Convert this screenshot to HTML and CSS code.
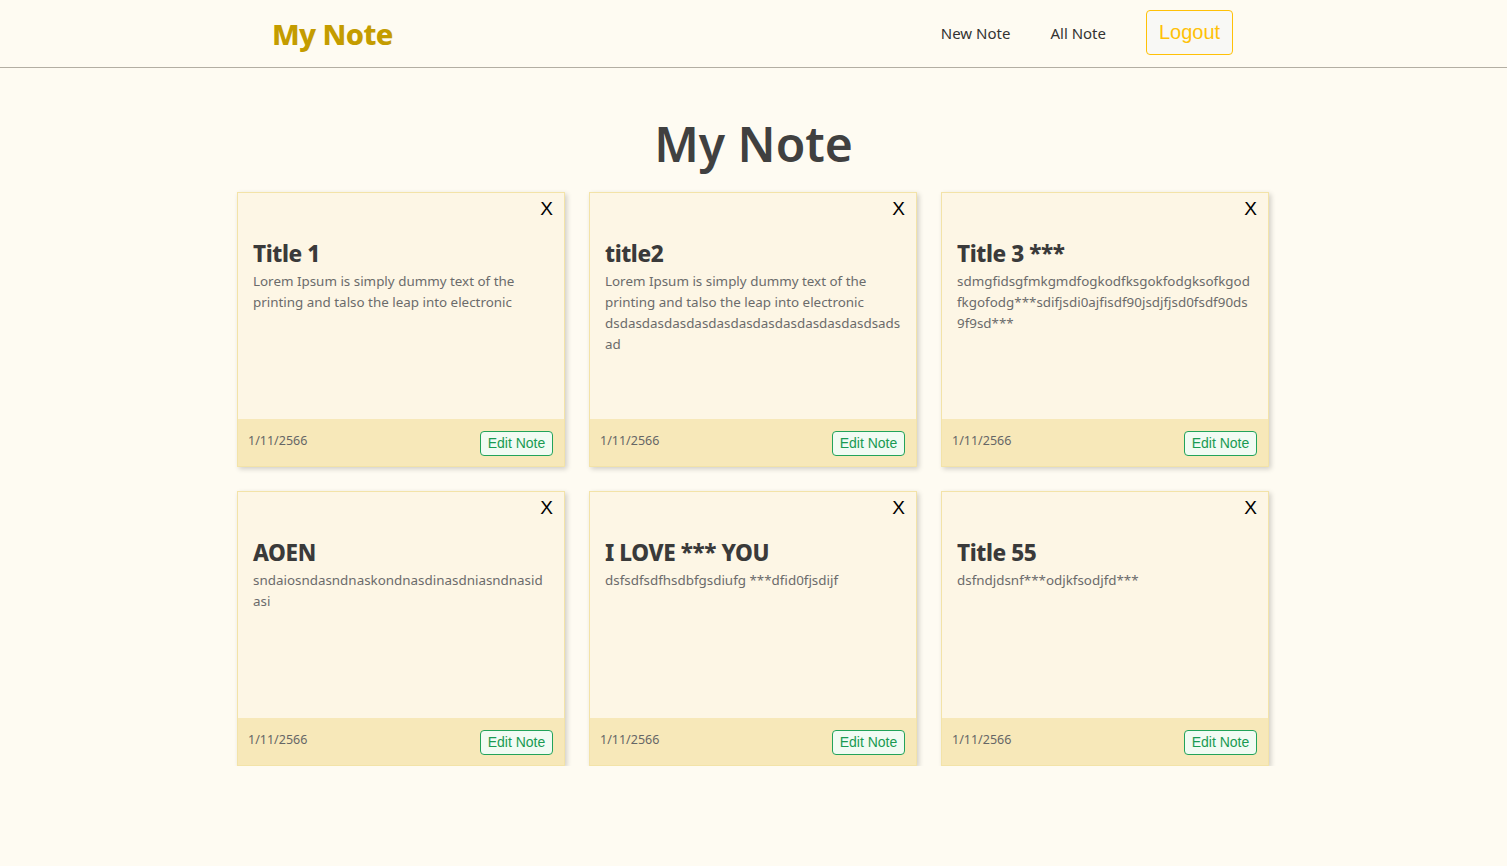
FILE: index.html
```html
<!DOCTYPE html>
<html lang="th">
<head>
<meta charset="utf-8">
<title>My Note</title>
<link rel="stylesheet" href="styles.css">
</head>
<body>
<header class="topbar">
  <div class="topbar-inner">
    <a class="brand" href="#">My Note</a>
    <nav class="nav">
      <a class="nav-link" href="#">New Note</a>
      <a class="nav-link" href="#">All Note</a>
      <button class="btn-logout" type="button">Logout</button>
    </nav>
  </div>
</header>
<main class="main">
  <h1 class="page-title">My Note</h1>
  <div class="grid">
    <div class="card">
      <div class="card-body">
        <div class="card-top"><button class="btn-close" type="button">X</button></div>
        <h2 class="card-title">Title 1</h2>
        <p class="card-text">Lorem Ipsum is simply dummy text of the printing and talso the leap into electronic</p>
      </div>
      <div class="card-footer"><span class="date">1/11/2566</span><button class="btn-edit" type="button">Edit Note</button></div>
    </div>
    <div class="card">
      <div class="card-body">
        <div class="card-top"><button class="btn-close" type="button">X</button></div>
        <h2 class="card-title">title2</h2>
        <p class="card-text">Lorem Ipsum is simply dummy text of the printing and talso the leap into electronic dsdasdasdasdasdasdasdasdasdasdasdasdsadsad</p>
      </div>
      <div class="card-footer"><span class="date">1/11/2566</span><button class="btn-edit" type="button">Edit Note</button></div>
    </div>
    <div class="card">
      <div class="card-body">
        <div class="card-top"><button class="btn-close" type="button">X</button></div>
        <h2 class="card-title">Title 3 ***</h2>
        <p class="card-text">sdmgfidsgfmkgmdfogkodfksgokfodgksofkgodfkgofodg***sdifjsdi0ajfisdf90jsdjfjsd0fsdf90ds9f9sd***</p>
      </div>
      <div class="card-footer"><span class="date">1/11/2566</span><button class="btn-edit" type="button">Edit Note</button></div>
    </div>
    <div class="card">
      <div class="card-body">
        <div class="card-top"><button class="btn-close" type="button">X</button></div>
        <h2 class="card-title">AOEN</h2>
        <p class="card-text">sndaiosndasndnaskondnasdinasdniasndnasidasi</p>
      </div>
      <div class="card-footer"><span class="date">1/11/2566</span><button class="btn-edit" type="button">Edit Note</button></div>
    </div>
    <div class="card">
      <div class="card-body">
        <div class="card-top"><button class="btn-close" type="button">X</button></div>
        <h2 class="card-title">I LOVE *** YOU</h2>
        <p class="card-text">dsfsdfsdfhsdbfgsdiufg ***dfid0fjsdijf</p>
      </div>
      <div class="card-footer"><span class="date">1/11/2566</span><button class="btn-edit" type="button">Edit Note</button></div>
    </div>
    <div class="card">
      <div class="card-body">
        <div class="card-top"><button class="btn-close" type="button">X</button></div>
        <h2 class="card-title">Title 55</h2>
        <p class="card-text">dsfndjdsnf***odjkfsodjfd***</p>
      </div>
      <div class="card-footer"><span class="date">1/11/2566</span><button class="btn-edit" type="button">Edit Note</button></div>
    </div>
  </div>
</main>
</body>
</html>
```
FILE: styles.css
```css
* { box-sizing: border-box; }
html, body { margin: 0; padding: 0; }
body {
  background: #fefbf2;
  font-family: "Noto Sans", "Open Sans", sans-serif;
  color: #444;
}
.topbar {
  height: 68px;
  border-bottom: 1px solid #b3aea3;
}
.topbar-inner {
  width: 963px;
  margin: 0 auto;
  height: 67px;
  display: flex;
  align-items: center;
  justify-content: space-between;
  padding-right: 2px;
}
.brand {
  font-size: 29px;
  font-weight: 800;
  color: #c49c00;
  text-decoration: none;
  letter-spacing: -0.6px;
  margin-top: -1px;
}
.nav {
  display: flex;
  align-items: center;
  gap: 40px;
}
.nav-link {
  font-size: 15px;
  color: #333;
  text-decoration: none;
  margin-top: -2px;
}
.btn-logout {
  font-family: "Liberation Sans", Arial, sans-serif;
  font-size: 20px;
  color: #ffc107;
  background: #f8f8f5;
  border: 1px solid #ffc107;
  border-radius: 4px;
  width: 87px;
  height: 45px;
  padding: 0;
  margin-bottom: 2px;
}
.main {
  width: 1033px;
  margin: 0 auto;
}
.page-title {
  text-align: center;
  font-size: 48px;
  font-weight: 600;
  color: #404040;
  margin: 0;
  padding-top: 46px;
  line-height: 60px;
  height: 124px;
}
.grid {
  display: grid;
  grid-template-columns: repeat(3, 328px);
  gap: 24px;
}
.card {
  height: 275px;
  background: #fdf6e5;
  border: 1px solid #f3e3a8;
  box-shadow: 2px 2px 5px rgba(0,0,0,0.18);
  display: flex;
  flex-direction: column;
}
.card-body {
  flex: 1;
  padding: 4px 15px 0 15px;
}
.card-top {
  display: flex;
  justify-content: flex-end;
  height: 32px;
}
.btn-close {
  background: none;
  border: none;
  padding: 0;
  font-family: "Liberation Sans", Arial, sans-serif;
  font-size: 19px;
  color: #000;
  margin-right: -4px;
  height: 24px;
}
.card-title {
  margin: 8px 0 0 0;
  font-size: 22.5px;
  font-weight: 800;
  color: #3a3a3a;
  line-height: 34px;
  letter-spacing: -0.4px;
}
.card-text {
  margin: 0;
  font-size: 13.4px;
  line-height: 21px;
  color: #6b6b6b;
  overflow-wrap: anywhere;
}
.card-footer {
  height: 47px;
  flex: 0 0 47px;
  background: #f7e8b9;
  display: flex;
  align-items: center;
  justify-content: space-between;
  padding: 1px 11px 0 10px;
}
.date {
  font-size: 12.5px;
  color: #666;
  margin-top: -6px;
}
.btn-edit {
  font-family: "Liberation Sans", Arial, sans-serif;
  font-size: 14px;
  color: #1a9a52;
  background: #f1fbf3;
  border: 1px solid #22a35a;
  border-radius: 4px;
  width: 73px;
  height: 25px;
  padding: 0;
}
```
